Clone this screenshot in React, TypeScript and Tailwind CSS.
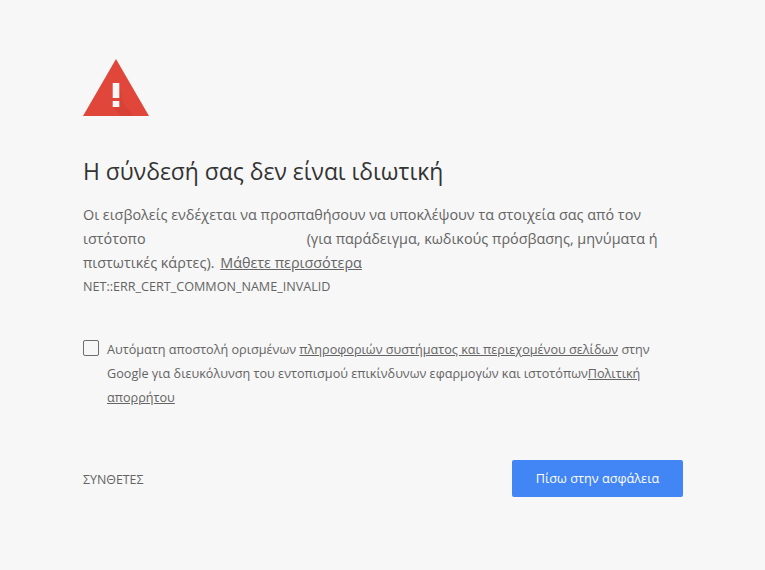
import React from 'react';

const WarningIcon: React.FC = () => (
  <svg width="66" height="58" viewBox="0 0 66 58" className="block">
    <path d="M33 0 L66 57 L0 57 Z" fill="#e0463a" />
    <path d="M36.3 24 L36.3 39 L36.3 42 L36.3 48 L29.7 48 L38.5 57 L50 57 L40 44 Z" fill="#c9392e" opacity="0.35" />
    <rect x="29.7" y="24" width="6.6" height="15" fill="#f7f7f7" />
    <rect x="29.7" y="42" width="6.6" height="6" fill="#f7f7f7" />
  </svg>
);

const App: React.FC = () => {
  return (
    <div className="h-[570px] w-[765px] overflow-hidden bg-[#f7f7f7] font-['Open_Sans','Noto_Sans',sans-serif] text-[#646464]">
      <div className="ml-[83px] w-[600px] pt-[59px]">
        <WarningIcon />

        <h1 className="mt-[39px] text-[22.9px] leading-[32px] font-normal text-[#333333]">
          Η σύνδεσή σας δεν είναι ιδιωτική
        </h1>

        <p className="mt-[15px] text-[14.4px] leading-[24px]">
          Οι εισβολείς ενδέχεται να προσπαθήσουν να υποκλέψουν τα στοιχεία σας από τον
          ιστότοπο <span className="inline-block w-[153.5px]"></span> (για παράδειγμα, κωδικούς πρόσβασης, μηνύματα ή
          πιστωτικές κάρτες). <a className="ml-[2px] underline">Μάθετε περισσότερα</a>
        </p>
        <div className="mt-[3px] text-[12.6px] leading-[18px]">
          NET::ERR_CERT_COMMON_NAME_INVALID
        </div>

        <div className="mt-[41px] flex gap-2">
          <div className="mt-[3px] h-[16px] w-[16px] shrink-0 rounded-[2px] border border-[#6e6e6e]"></div>
          <p className="text-[12.65px] leading-[24px]">
            Αυτόματη αποστολή ορισμένων <a className="underline">πληροφοριών συστήματος και περιεχομένου σελίδων</a> στην
            Google για διευκόλυνση του εντοπισμού επικίνδυνων εφαρμογών και ιστοτόπων<a className="underline">Πολιτική απορρήτου</a>
          </p>
        </div>

        <div className="mt-[51px] flex items-center justify-between">
          <span className="pt-[4px] text-[12.4px]">ΣΥΝΘΕΤΕΣ</span>
          <button className="h-[37px] w-[171px] rounded-[2px] bg-[#4285f4] text-[12.7px] text-white">
            Πίσω στην ασφάλεια
          </button>
        </div>
      </div>
    </div>
  );
};

export default App;
